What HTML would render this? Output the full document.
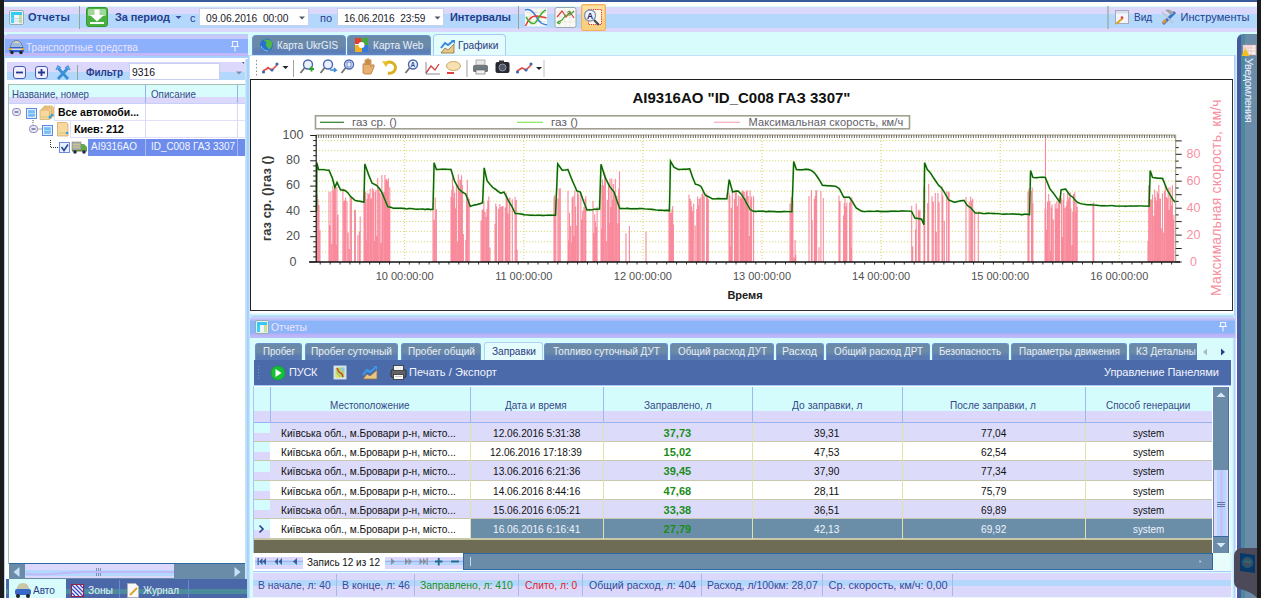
<!DOCTYPE html>
<html><head><meta charset="utf-8">
<style>
*{margin:0;padding:0;box-sizing:border-box}
html,body{width:1261px;height:598px;overflow:hidden;background:#d8fcfc;font-family:"Liberation Sans",sans-serif;font-size:11px;color:#000}
.a{position:absolute}
.t{position:absolute;white-space:nowrap;line-height:1}
svg{position:absolute;left:0;top:0;overflow:visible}
</style></head><body>
<div class="a" style="left:0px;top:0px;width:1261px;height:34px;background:linear-gradient(#3a5a9c 0,#3a5a9c 2px,#fff 2px,#fff 6.5px,#d8fcfc 6.5px,#d8fcfc 7px,#dcd8fc 7px,#dcd8fc 14px,#b4d8fc 14px,#b4d8fc 28.5px,#dcd8fc 28.5px,#dcd8fc 32px,#d8fcfc 32px)"></div>
<svg width="1261" height="598">
 <rect x="9.5" y="10.5" width="14" height="14" rx="1.5" fill="#e8f4f4" stroke="#98a8b0"/>
 <rect x="11" y="12" width="11" height="3" fill="#38c8f8"/>
 <rect x="11" y="15" width="3" height="8" fill="#38d0f8"/>
 <rect x="15" y="15" width="3" height="8" fill="#f4f4fc"/>
 <rect x="19" y="15" width="3" height="8" fill="#c8e098"/>
 <path d="M11 18.5h11M11 21h11" stroke="#a0c8e0" stroke-width=".6"/>
 <line x1="79.5" y1="6" x2="79.5" y2="29" stroke="#90a898"/>
 <rect x="86.5" y="7.5" width="21" height="19" rx="2.5" fill="#48b040" stroke="#389830"/>
 <rect x="88" y="9" width="18" height="7" rx="1" fill="#a0d898"/>
 <path d="M94.5 9.5h5v5.5h4.5l-7 6.5-7-6.5h4.5z" fill="#fff"/>
 <rect x="90" y="22" width="14" height="2" fill="#fff"/>
 <path d="M175.5 16h6l-3 3z" fill="#3a4d9c"/>
 <line x1="518.5" y1="6" x2="518.5" y2="29" stroke="#90a898"/>
 <rect x="525" y="8.5" width="22" height="18" fill="#fbfbf6"/>
 <path d="M526 12.5h20M526 17h20M526 21.5h20M531 9v17M536 9v17M541 9v17" stroke="#e0dcc8" stroke-width=".7"/>
 <path d="M525 10c6-2 9 3 12 8s5 6 10 7" stroke="#3a80e8" stroke-width="1.5" fill="none"/>
 <path d="M525.5 26c3-7 6-10 10-10s6 1 11 2" stroke="#e83830" stroke-width="1.5" fill="none"/>
 <path d="M526 17c3 5 6 8 9 6s6-12 11-13" stroke="#40b030" stroke-width="1.5" fill="none"/>
 <rect x="555" y="7.5" width="21" height="20" rx="2" fill="#fafaf8" stroke="#98a8b0"/>
 <path d="M556 12h19M556 17h19M556 22h19M560 8v19M565 8v19M570 8v19" stroke="#e8e4d0" stroke-width=".7"/>
 <path d="M557 17l5-6 4 6 4-5 4 6" stroke="#e04040" stroke-width="1.2" fill="none"/>
 <path d="M557 23l5-3 4-5 4 0 4-4" stroke="#40a030" stroke-width="1.2" fill="none"/>
 <circle cx="559" cy="22.5" r="1.3" fill="none" stroke="#40a030"/><circle cx="569" cy="12.5" r="1.3" fill="none" stroke="#40a030"/>
 <rect x="581.5" y="4.5" width="24" height="26" rx="1.5" fill="#f8d080" stroke="#f0b060"/>
 <rect x="583" y="6" width="21" height="12" fill="#fce0a0"/>
 <rect x="588.5" y="9.5" width="13" height="15" fill="#fff8e8" stroke="#e03030" stroke-dasharray="1.2 1"/>
 <circle cx="590" cy="15.5" r="5.5" fill="#f0f4ff" stroke="#8898b8" stroke-width="1.4"/>
 <path d="M594 20l5 5" stroke="#404858" stroke-width="2.2"/>
 <text x="587" y="19" font-size="8.5" font-weight="bold" fill="#202868" font-family="Liberation Sans">A</text>
 <line x1="1108" y1="6" x2="1108" y2="29" stroke="#90a898" stroke-width="1.2"/>
 <rect x="1115.5" y="10.5" width="13" height="13" fill="#f4f4fc" stroke="#a8a8b8"/>
 <rect x="1116" y="11" width="12" height="2.5" fill="#d8e0f0"/>
 <path d="M1116 24l7-6" stroke="#e0a020" stroke-width="2"/>
 <circle cx="1122" cy="17.5" r="1.3" fill="#e04040"/>
 <path d="M1163 24l12-12" stroke="#3a70c8" stroke-width="3"/>
 <path d="M1162 12l11 11" stroke="#c0c0c8" stroke-width="1.5"/>
 <path d="M1163 23l3-3" stroke="#e09030" stroke-width="3"/>
 <path d="M1165 10q5-2 9 3l-3 2z" fill="#a0a0a8"/>
</svg>
<div class="t" style="left:28.0px;top:12.0px;font-size:11px;color:#2a3d8c;font-weight:bold;letter-spacing:0.18px;">Отчеты</div>
<div class="t" style="left:115.0px;top:12.0px;font-size:11px;color:#2a3d8c;font-weight:bold;letter-spacing:-0.11px;">За период</div>
<div class="t" style="left:190.0px;top:12.5px;font-size:11px;color:#2a3d8c;">c</div>
<div class="a" style="left:199px;top:8px;width:110px;height:18px;background:#fff;border:1px solid #c8d0f0"></div>
<div class="t" style="left:206.0px;top:13.0px;font-size:11px;color:#181828;transform:scaleX(0.930);transform-origin:0 0;">09.06.2016  00:00</div>
<div class="t" style="left:320.0px;top:12.5px;font-size:11px;color:#2a3d8c;">по</div>
<div class="a" style="left:337px;top:8px;width:107px;height:18px;background:#fff;border:1px solid #c8d0f0"></div>
<div class="t" style="left:344.0px;top:13.0px;font-size:11px;color:#181828;transform:scaleX(0.918);transform-origin:0 0;">16.06.2016  23:59</div>
<svg width="1261" height="598"><path d="M299 16.5h6l-3 3z" fill="#505868"/><path d="M434.5 16.5h6l-3 3z" fill="#505868"/></svg>
<div class="t" style="left:450.0px;top:12.0px;font-size:11px;color:#2a3d8c;font-weight:bold;letter-spacing:-0.11px;">Интервалы</div>
<div class="t" style="left:1133.5px;top:12.0px;font-size:11px;color:#2a3d8c;transform:scaleX(0.914);transform-origin:0 0;">Вид</div>
<div class="t" style="left:1180.5px;top:12.0px;font-size:11px;color:#2a3d8c;letter-spacing:0.04px;">Инструменты</div>
<div class="a" style="left:0px;top:0px;width:4px;height:598px;background:#1c1c1c"></div>
<div class="a" style="left:1257px;top:34px;width:4px;height:564px;background:#1c1c1c"></div>
<div class="a" style="left:1257px;top:0px;width:4px;height:34px;background:#1c1c1c"></div>
<div class="a" style="left:4px;top:34px;width:244px;height:564px;background:#fff;border-left:1px solid #b0d0f8;border-right:1px solid #a8c8f8"></div>
<div class="a" style="left:245px;top:34px;width:3px;height:564px;background:linear-gradient(90deg,#c8f0fc,#a8c8f8)"></div>
<div class="a" style="left:5px;top:34px;width:243px;height:25px;border-radius:3px 3px 0 0;background:linear-gradient(#b0d0f8 0,#b0d0f8 1px,#c8c8fc 1px,#c8c8fc 4.5px,#8cb0fc 4.5px,#8cb0fc 18.5px,#c0b8f8 18.5px,#c0b8f8 21.5px,#a8d0fc 21.5px,#a8d0fc 23.5px,#fff 23.5px)"></div>
<svg width="1261" height="598">
 <path d="M10.5 49c0-6 3-8.5 6-8.5s6 2.5 6 8.5z" fill="#d8d0b0" stroke="#4868b0" stroke-width=".8"/>
 <rect x="12" y="43" width="9" height="4" rx="1" fill="#a0b8e0"/>
 <rect x="9" y="47" width="15" height="5" rx="1.5" fill="#3060c0"/>
 <rect x="10" y="48.5" width="13" height="1.4" fill="#f0f0f0"/>
 <rect x="9" y="48" width="2.5" height="2" fill="#f0a020"/><rect x="21.5" y="48" width="2.5" height="2" fill="#f0a020"/>
 <circle cx="12" cy="52.5" r="1.7" fill="#222"/><circle cx="21" cy="52.5" r="1.7" fill="#222"/>
 <path d="M232.5 41.5h5v5h-5zM235 46.5v5M231 46.5h8" stroke="#f0f0ff" fill="none" stroke-width="1.1"/>
</svg>
<div class="t" style="left:26.0px;top:42.0px;font-size:11px;color:#ece4ff;transform:scaleX(0.915);transform-origin:0 0;">Транспортные средства</div>
<div class="a" style="left:6px;top:59px;width:239px;height:2px;background:#fff"></div>
<div class="a" style="left:7px;top:62px;width:238px;height:18px;background:linear-gradient(#dcd8fc 0,#dcd8fc 10px,#b4d8fc 10px)"></div>
<svg width="1261" height="598">
 <rect x="13.5" y="66.5" width="12" height="12" rx="2.5" fill="#f0f0ff" stroke="#4858b0"/>
 <path d="M16 72.5h7" stroke="#283890" stroke-width="1.8"/>
 <rect x="35.5" y="66.5" width="12" height="12" rx="2.5" fill="#f0f0ff" stroke="#4858b0"/>
 <path d="M38 72.5h7M41.5 69v7" stroke="#283890" stroke-width="1.8"/>
 <path d="M58 68l10 11M68 68l-10 11" stroke="#3890d8" stroke-width="2.8"/>
 <path d="M56 70l2-4 3 2M70 70l-2-4-3 2" stroke="#4898e0" stroke-width="1.4" fill="none"/>
 <line x1="77.5" y1="65" x2="77.5" y2="80" stroke="#90a898"/>
 <path d="M236 71.5h6l-3 3z" fill="#8090a8"/>
 <path d="M242 62l2 0 0 2z" fill="#3a4a98"/>
</svg>
<div class="t" style="left:86.0px;top:67.0px;font-size:11px;color:#2a3d8c;font-weight:bold;transform:scaleX(0.901);transform-origin:0 0;">Фильтр</div>
<div class="a" style="left:129px;top:63px;width:91px;height:17px;background:#fff;border:1px solid #c8d0f0"></div>
<div class="t" style="left:132.0px;top:67.0px;font-size:11px;color:#101018;transform:scaleX(0.939);transform-origin:0 0;">9316</div>
<div class="a" style="left:8px;top:84px;width:237px;height:1px;background:#a8c0b0"></div>
<div class="a" style="left:8px;top:84px;width:1px;height:480px;background:#a8c0b0"></div>
<div class="a" style="left:9px;top:85px;width:236px;height:18px;background:linear-gradient(#d8fcfc 0,#d8fcfc 12px,#dcd8fc 12px)"></div>
<div class="a" style="left:145px;top:85px;width:1px;height:18px;background:#98b0f0"></div>
<div class="a" style="left:237px;top:85px;width:1px;height:18px;background:#98b0f0"></div>
<div class="t" style="left:12.0px;top:89.0px;font-size:11px;color:#384888;transform:scaleX(0.882);transform-origin:0 0;">Название, номер</div>
<div class="t" style="left:151.0px;top:89.0px;font-size:11px;color:#384888;transform:scaleX(0.889);transform-origin:0 0;">Описание</div>
<div class="a" style="left:9px;top:103px;width:236px;height:1px;background:#c8d0f8"></div>
<div class="a" style="left:54px;top:104px;width:191px;height:17px;border-left:1px solid #e0e0f8;border-bottom:1px solid #e0e0f8"></div>
<div class="a" style="left:70px;top:121px;width:175px;height:17px;border-left:1px solid #e0e0f8;border-bottom:1px solid #e0e0f8"></div>
<div class="a" style="left:145px;top:104px;width:1px;height:34px;background:#d8d8f8"></div>
<div class="a" style="left:237px;top:104px;width:1px;height:34px;background:#d8d8f8"></div>
<div class="a" style="left:88px;top:139px;width:157px;height:17px;background:#6e8cec"></div>
<div class="a" style="left:145px;top:139px;width:1px;height:17px;background:#a8b8f0"></div>
<div class="a" style="left:237px;top:139px;width:1px;height:17px;background:#a8b8f0"></div>
<svg width="1261" height="598">
 <rect x="12.5" y="108.5" width="8" height="7" rx="3" fill="#e8e8f8" stroke="#8888b8"/><path d="M14.5 112h4" stroke="#505080" stroke-width="1.2"/>
 <rect x="26.5" y="108.5" width="10" height="10" fill="#e0f0ff" stroke="#5a8ae8"/><rect x="28.5" y="110.5" width="6" height="6" fill="#70c0f8" stroke="#80a8f0" stroke-width=".5"/><path d="M28.5 113.5h6" stroke="#c0e0ff" stroke-width=".8"/>
 <path d="M44 106h8l1.5 1.5v9h-9.5z" fill="#f0c880" stroke="#c8a050" stroke-width=".6"/>
 <path d="M42 108h8l1.5 1.5v9h-9.5z" fill="#f4d090" stroke="#c8a050" stroke-width=".6"/>
 <path d="M40 110h8l1.5 1.5v8h-9.5z" fill="#f8d8a0" stroke="#c8a050" stroke-width=".6"/>
 <path d="M41 117h7" stroke="#c8d070" stroke-width="1"/>
 <circle cx="50" cy="117" r="1.6" fill="#30a0e0"/><circle cx="52" cy="115" r="1.3" fill="#30a0e0"/>
 <rect x="29.5" y="125.5" width="8" height="7" rx="3" fill="#e8e8f8" stroke="#8888b8"/><path d="M31.5 129h4" stroke="#505080" stroke-width="1.2"/>
 <path d="M33 120v4.5M38.5 129h3" stroke="#505050" stroke-dasharray="1 1"/>
 <rect x="42.5" y="125.5" width="10" height="10" fill="#e0f0ff" stroke="#5a8ae8"/><rect x="44.5" y="127.5" width="6" height="6" fill="#70c0f8" stroke="#80a8f0" stroke-width=".5"/><path d="M44.5 130.5h6" stroke="#c0e0ff" stroke-width=".8"/>
 <path d="M57.5 122.5h9l1.5 1.5v12h-10.5z" fill="#f8d8a0" stroke="#c8a050" stroke-width=".7"/>
 <path d="M59 133h6" stroke="#c8d070" stroke-width="1"/>
 <circle cx="67" cy="133" r="1.3" fill="#30a0e0"/>
 <path d="M50.5 140v7.5h8" stroke="#303030" fill="none" stroke-dasharray="1 1"/>
 <rect x="59.5" y="142.5" width="10" height="10" fill="#e8f0ff" stroke="#6a8ae0"/>
 <path d="M61.5 147l2.5 3.5 4-6" stroke="#2a4a98" stroke-width="1.6" fill="none"/>
 <rect x="72" y="142" width="9" height="8" fill="#b0b0a8" stroke="#808078" stroke-width=".6"/>
 <path d="M73 144.5h7M73 147h7" stroke="#d8d880" stroke-width=".6"/>
 <path d="M81 144h3l3 3v4h-6z" fill="#60a848"/>
 <rect x="72" y="150" width="15" height="1.5" fill="#608838"/>
 <circle cx="75" cy="152" r="1.8" fill="#28285a"/><circle cx="84" cy="152" r="1.8" fill="#28285a"/>
</svg>
<div class="t" style="left:58.0px;top:107.0px;font-size:11px;color:#080808;font-weight:bold;transform:scaleX(0.950);transform-origin:0 0;">Все автомоби...</div>
<div class="t" style="left:74.0px;top:124.0px;font-size:11px;color:#080808;font-weight:bold;letter-spacing:-0.18px;">Киев: 212</div>
<div class="t" style="left:91.0px;top:141.0px;font-size:11px;color:#f4f8ff;transform:scaleX(0.905);transform-origin:0 0;">AI9316AO</div>
<div class="t" style="left:151.0px;top:141.0px;font-size:11px;color:#f4f8ff;transform:scaleX(0.902);transform-origin:0 0;">ID_C008 ГАЗ 3307</div>
<div class="a" style="left:9px;top:563px;width:236px;height:1px;background:#2a6aa8"></div>
<div class="a" style="left:9px;top:564px;width:236px;height:15px;background:#6a8ca8"></div>
<div class="a" style="left:25px;top:564px;width:149px;height:14px;background:linear-gradient(#dcd8fc 0,#dcd8fc 6px,#b4d8fc 6px,#b4d8fc 12px,#dcd8fc 12px)"></div>
<svg width="1261" height="598">
 <path d="M19.5 567v10l-6-5z" fill="#c8e0f8"/>
 <path d="M234.5 567v10l6-5z" fill="#c8e0f8"/>
 <path d="M96.5 568v8M98.5 568v8M100.5 568v8" stroke="#8090b0"/>
 <path d="M26 574c20 2 40-2 60-2h88" stroke="#c0b8f8" stroke-width="2" fill="none"/>
</svg>
<div class="a" style="left:6px;top:579px;width:241px;height:19px;background:linear-gradient(#4a68a8 0,#4a68a8 10px,#4a8c9c 10px,#4a8c9c 15px,#4a68a8 15px)"></div>
<div class="a" style="left:8px;top:579px;width:58px;height:19px;background:#d8fcfc;border-left:1px solid #4a68a8"></div>
<svg width="1261" height="598">
 <path d="M16 594c0-8 3-11 7-11s7 3 7 11z" fill="#c8c8a8"/>
 <rect x="15" y="589" width="16" height="6" rx="2" fill="#3868c8"/>
 <circle cx="18" cy="596" r="2" fill="#222"/><circle cx="28" cy="596" r="2" fill="#222"/>
 <rect x="71.5" y="584.5" width="12" height="12" fill="#f0f0ff" stroke="#a02040"/>
 <path d="M80 585l3 3M76 585l7 7M72 585l11 11M72 589l7 7M72 593l3 3" stroke="#3a48c8" stroke-width="1.3"/>
 <line x1="119.5" y1="580" x2="119.5" y2="598" stroke="#6a8ad0"/>
 <line x1="188.5" y1="580" x2="188.5" y2="598" stroke="#6a8ad0"/>
 
 <path d="M127.5 583.5h8l3 3v11h-11z" fill="#f8f8f8" stroke="#b0b0b8"/>
 <path d="M130 595l7-7" stroke="#e0a020" stroke-width="1.8"/>
</svg>
<div class="t" style="left:33.0px;top:585.0px;font-size:11px;color:#2a3d8c;transform:scaleX(0.917);transform-origin:0 0;">Авто</div>
<div class="t" style="left:88.0px;top:585.0px;font-size:11px;color:#e8f0ff;transform:scaleX(0.935);transform-origin:0 0;">Зоны</div>
<div class="t" style="left:143.0px;top:585.0px;font-size:11px;color:#e8f0ff;transform:scaleX(0.896);transform-origin:0 0;">Журнал</div>
<div class="a" style="left:248px;top:34px;width:989px;height:282px;background:#d8fcfc"></div>
<div class="a" style="left:252px;top:35px;width:94px;height:21px;border-radius:4px 4px 0 0;background:linear-gradient(#6a8aa8 0,#6a8aa8 10px,#5a7cb8 16px,#6a90c8 21px);border:1px solid #6a90c8;border-bottom:none"></div>
<div class="a" style="left:347px;top:35px;width:84px;height:21px;border-radius:4px 4px 0 0;background:linear-gradient(#6a8aa8 0,#6a8aa8 10px,#5a7cb8 16px,#6a90c8 21px);border:1px solid #6a90c8;border-bottom:none"></div>
<div class="a" style="left:433px;top:34px;width:73px;height:22px;border-radius:4px 4px 0 0;background:#e4fcfc;border:1px solid #a8c8f8;border-bottom:none"></div>
<svg width="1261" height="598">
 <circle cx="266.5" cy="45" r="6.5" fill="#2870d0"/><path d="M262 40c3 0 5 2 4 4s2 3 3 6c2-2 4-5 3-8-1-2-4-3-10-2z" fill="#50b848"/>
 <path d="M261 46c1 3 4 5 7 5" stroke="#90c8f8" fill="none"/>
 <rect x="355" y="38" width="13" height="14" rx="1" fill="#fff"/>
 <path d="M355 38h7v6h-7z" fill="#e04030"/><path d="M361 38h7v7h-6z" fill="#48a840"/><path d="M355 45h7v7h-7z" fill="#f0b020"/><path d="M362 45h6v7h-6z" fill="#3878d8"/>
 <circle cx="361.5" cy="45" r="3" fill="#fff"/>
 <path d="M441 53l4-5 3 2 6-6v9z" fill="#e8c880" stroke="#8a7050" stroke-width=".8"/>
 <path d="M441 48l4-5 3 2 5-4" stroke="#3a88d8" stroke-width="2" fill="none"/><path d="M451 40h4v4z" fill="#3a88d8"/>
</svg>
<div class="t" style="left:277.0px;top:40.0px;font-size:11px;color:#e8f0ff;transform:scaleX(0.889);transform-origin:0 0;">Карта UkrGIS</div>
<div class="t" style="left:372.5px;top:40.0px;font-size:11px;color:#e8f0ff;transform:scaleX(0.919);transform-origin:0 0;">Карта Web</div>
<div class="t" style="left:458.0px;top:40.0px;font-size:11px;color:#2a3a80;transform:scaleX(0.924);transform-origin:0 0;">Графики</div>
<div class="a" style="left:248px;top:55px;width:989px;height:261px;background:#fff"></div>
<div class="a" style="left:248px;top:55px;width:2px;height:261px;background:linear-gradient(90deg,#a8c8f8,#c8f0fc)"></div>
<div class="a" style="left:1234px;top:55px;width:3px;height:261px;background:linear-gradient(90deg,#a8c8f8,#d0f8fc)"></div>
<div class="a" style="left:250px;top:55px;width:984px;height:1px;background:#c8e0f8"></div>
<svg width="1261" height="598">
 <path d="M256.5 60v16" stroke="#909090" stroke-dasharray="1.5 2"/>
 <path d="M263 71l5-3 4 2 5-5" stroke="#e84848" stroke-width="1.6" fill="none"/>
 <circle cx="263.5" cy="72" r="1.6" fill="#3a6ab0"/><circle cx="272" cy="70" r="1.6" fill="#3a6ab0"/><circle cx="277" cy="64" r="1.6" fill="#3a6ab0"/><circle cx="268" cy="68" r="1.2" fill="#e84848"/>
 <path d="M282.5 66h6l-3 3z" fill="#202020"/>
 <line x1="293.5" y1="60" x2="293.5" y2="77" stroke="#a0a0a0"/>
 <g stroke="#4a68b0" fill="#eaf0ff" stroke-width="1.4">
  <circle cx="308" cy="64.5" r="4.5"/><circle cx="328" cy="64.5" r="4.5"/><circle cx="349" cy="64.5" r="4.5"/><circle cx="413" cy="64.5" r="4.5"/>
 </g>
 <path d="M304.5 68l-4 5M324.5 68l-4 5M345.5 68l-4 5M409.5 68l-4 5" stroke="#707070" stroke-width="1.8"/>
 <path d="M309 69h5M311.5 66.5v5" stroke="#30a030" stroke-width="2"/>
 <path d="M330 70h6l-2-2M336 70l-2 2" stroke="#3a8ad8" stroke-width="1.5" fill="none"/>
 <path d="M347 62h4v5h-4z" stroke="#4a68b0" fill="none" stroke-width=".8"/>
 <path d="M363 73v-8c0-2 2-2 2 0v-4c0-2 2-2 2 0v4-5c0-2 2-2 2 0v5-4c0-2 2-2 2 0v6l1-2c1-1 3 0 2 2l-3 7h-6z" fill="#e8b070" stroke="#b87838" stroke-width=".8"/>
 <path d="M385 64a6 5.5 0 1 1 3 9" stroke="#d8b020" stroke-width="3" fill="none"/><path d="M382 61l4 6 3-5z" fill="#e8c020"/>
 <text x="410.5" y="67" font-size="6.5" font-weight="bold" fill="#3050a0" font-family="Liberation Sans">A</text>
 <path d="M426 73l5-7 4 4 4-6" stroke="#d04040" stroke-width="1.3" fill="none"/><path d="M426 74h14M426 62v12" stroke="#707070" stroke-width=".8"/>
 <ellipse cx="453.5" cy="66" rx="7" ry="4.5" fill="#f8e0b0" stroke="#c8a868"/>
 <path d="M447 73h7" stroke="#e04040" stroke-width="2"/>
 <line x1="467" y1="60" x2="467" y2="77" stroke="#a0a0a0"/>
 <rect x="473" y="65" width="15" height="7" rx="1.5" fill="#707880"/><rect x="476" y="60" width="9" height="5" fill="#e8e8e8" stroke="#808080" stroke-width=".6"/><rect x="476" y="70" width="9" height="4" fill="#f0f0f0" stroke="#606060" stroke-width=".6"/>
 <rect x="495.5" y="62" width="14" height="11" rx="2" fill="#282830"/><circle cx="502.5" cy="67.5" r="3.5" fill="#505868" stroke="#9098a8"/><rect x="499" y="60.5" width="5" height="2" fill="#383840"/>
 <path d="M517 71l5-3 4 2 5-5" stroke="#e84848" stroke-width="1.6" fill="none"/>
 <circle cx="517.5" cy="72" r="1.6" fill="#3a6ab0"/><circle cx="526" cy="70" r="1.6" fill="#3a6ab0"/><circle cx="531" cy="64" r="1.6" fill="#3a6ab0"/>
 <path d="M536 67h6l-3 3z" fill="#202020"/>
 <line x1="544" y1="60" x2="544" y2="77" stroke="#c0c0c0"/>
</svg>
<div class="a" style="left:250px;top:78.5px;width:983px;height:232px;background:#fff;border:1px solid #303030;border-top:1.5px solid #202020;border-left:1.5px solid #202020"></div>
<svg width="1261" height="598">
 <text x="741.5" y="102.5" text-anchor="middle" font-size="15" font-weight="bold" fill="#101010" font-family="Liberation Sans">AI9316AO "ID_C008 ГАЗ 3307"</text>
 <rect x="315.5" y="115.8" width="594" height="13" fill="#fff" stroke="#a0a090" stroke-width="1.6"/>
 <line x1="320" y1="122.3" x2="344" y2="122.3" stroke="#3a8a3a" stroke-width="1.3"/>
 <line x1="517" y1="122.3" x2="543" y2="122.3" stroke="#90e860" stroke-width="1.3"/>
 <line x1="714" y1="122.3" x2="740" y2="122.3" stroke="#f8b0c0" stroke-width="1.3"/>
 <path d="M316.2 251.9H1175.7 M316.2 241.8H1175.7 M316.2 231.6H1175.7 M316.2 221.5H1175.7 M316.2 211.4H1175.7 M316.2 201.3H1175.7 M316.2 191.2H1175.7 M316.2 181.0H1175.7 M316.2 170.9H1175.7 M316.2 160.8H1175.7 M316.2 150.7H1175.7 M316.2 140.6H1175.7 M404.7 135.0V262.0 M523.8 135.0V262.0 M642.9 135.0V262.0 M762.0 135.0V262.0 M881.1 135.0V262.0 M1000.2 135.0V262.0 M1119.3 135.0V262.0" stroke="#d4d460" stroke-width="1" stroke-dasharray="1 2" fill="none"/>
 <path d="M316.5 262V243.4 M317.3 262V194.7 M318.5 262V254.3 M329.0 262V191.7 M329.7 262V225.3 M330.9 262V191.6 M331.6 262V244.1 M332.8 262V185.9 M333.6 262V189.6 M334.4 262V189.7 M335.4 262V184.3 M336.1 262V245.0 M336.9 262V187.0 M338.0 262V214.8 M342.9 262V188.3 M344.1 262V201.2 M344.9 262V200.3 M345.6 262V197.4 M347.0 262V201.1 M348.2 262V232.4 M349.4 262V248.9 M350.2 262V197.1 M351.4 262V196.9 M354.6 262V210.1 M355.4 262V209.7 M357.9 262V234.9 M359.4 262V231.7 M360.2 262V216.5 M364.0 262V189.1 M365.0 262V193.3 M365.7 262V191.5 M366.4 262V240.3 M367.1 262V198.9 M367.9 262V193.1 M368.9 262V194.2 M370.1 262V188.7 M370.9 262V199.3 M371.6 262V198.3 M372.3 262V188.1 M373.5 262V189.6 M374.3 262V241.0 M375.1 262V191.7 M375.9 262V190.1 M377.0 262V235.8 M377.7 262V178.0 M378.9 262V187.8 M380.1 262V192.7 M381.1 262V242.9 M381.9 262V175.1 M382.7 262V192.5 M383.9 262V191.7 M384.9 262V174.9 M385.7 262V179.5 M386.7 262V179.1 M387.7 262V181.0 M388.4 262V178.2 M389.1 262V200.8 M389.8 262V187.2 M433.0 262V203.0 M434.2 262V219.8 M435.2 262V197.4 M436.4 262V209.2 M451.0 262V197.0 M451.8 262V189.8 M452.5 262V173.4 M453.2 262V185.7 M453.9 262V198.1 M454.6 262V192.6 M455.6 262V208.2 M456.4 262V184.9 M457.6 262V241.6 M458.3 262V174.2 M459.1 262V191.4 M459.9 262V179.5 M460.6 262V180.1 M461.6 262V175.3 M462.4 262V185.2 M463.4 262V233.9 M465.8 262V239.8 M466.5 262V198.7 M467.3 262V179.8 M468.0 262V197.1 M469.2 262V198.6 M481.0 262V220.4 M482.2 262V210.0 M483.2 262V209.0 M483.9 262V201.2 M485.1 262V211.9 M486.3 262V217.0 M487.0 262V209.1 M487.8 262V200.4 M488.8 262V196.4 M490.0 262V247.6 M495.0 262V224.0 M495.8 262V203.6 M496.6 262V206.4 M498.6 262V208.8 M499.8 262V203.9 M501.0 262V207.0 M502.2 262V205.9 M503.0 262V205.9 M505.2 262V207.4 M506.2 262V192.8 M507.2 262V196.3 M508.0 262V213.5 M509.2 262V198.1 M509.9 262V197.6 M512.3 262V199.3 M515.1 262V196.8 M516.3 262V200.0 M517.1 262V249.8 M554.0 262V197.2 M554.7 262V195.0 M555.9 262V200.0 M557.9 262V198.6 M559.1 262V188.4 M560.3 262V188.3 M568.0 262V190.8 M568.8 262V240.2 M569.5 262V212.7 M570.7 262V225.9 M571.4 262V242.2 M572.2 262V197.6 M573.2 262V196.1 M574.0 262V236.3 M574.8 262V190.2 M575.6 262V206.4 M576.8 262V225.6 M577.5 262V191.9 M578.7 262V193.8 M580.9 262V192.8 M581.9 262V219.6 M582.7 262V210.8 M583.9 262V206.9 M585.1 262V199.0 M585.8 262V196.3 M593.0 262V200.9 M593.7 262V233.0 M594.7 262V214.3 M595.4 262V221.3 M596.4 262V226.9 M597.1 262V207.1 M601.0 262V184.9 M601.7 262V228.8 M602.5 262V179.6 M603.5 262V185.4 M604.7 262V171.9 M605.4 262V174.8 M606.6 262V241.1 M607.3 262V199.7 M608.5 262V183.8 M609.3 262V223.3 M610.0 262V178.4 M611.0 262V207.0 M611.8 262V178.4 M612.6 262V199.8 M613.4 262V183.9 M614.1 262V194.6 M615.3 262V178.8 M616.0 262V194.8 M616.8 262V196.0 M618.0 262V223.3 M618.7 262V188.6 M619.5 262V171.3 M626.0 262V233.3 M629.4 262V226.0 M646.0 262V231.6 M669.0 262V207.8 M670.0 262V212.5 M671.0 262V212.7 M672.0 262V209.0 M672.7 262V206.1 M673.4 262V224.2 M689.0 262V194.6 M690.2 262V198.7 M691.0 262V201.4 M691.7 262V206.5 M692.5 262V211.1 M693.7 262V203.5 M695.2 262V225.5 M696.8 262V208.9 M697.6 262V196.4 M698.4 262V205.6 M699.1 262V199.0 M700.3 262V197.5 M702.0 262V193.9 M703.0 262V190.2 M704.2 262V196.2 M706.6 262V193.6 M707.6 262V195.1 M708.3 262V199.2 M729.0 262V192.5 M729.8 262V195.4 M730.5 262V246.3 M731.3 262V207.7 M732.3 262V191.9 M734.5 262V199.0 M735.3 262V190.8 M736.3 262V189.9 M737.3 262V205.9 M738.3 262V195.6 M740.5 262V198.6 M741.2 262V198.3 M742.2 262V248.3 M743.2 262V190.8 M743.9 262V191.7 M740.0 262V196.3 M741.2 262V204.6 M742.0 262V190.5 M743.0 262V195.3 M744.2 262V192.0 M745.4 262V198.0 M746.2 262V191.4 M747.2 262V190.1 M748.2 262V196.0 M749.4 262V236.0 M750.1 262V190.6 M750.8 262V199.4 M751.6 262V196.4 M753.6 262V196.3 M790.0 262V203.6 M791.2 262V197.6 M791.9 262V197.1 M792.9 262V201.0 M794.1 262V257.4 M795.1 262V240.0 M795.8 262V254.4 M809.0 262V196.0 M811.4 262V190.1 M812.1 262V220.0 M814.3 262V199.1 M815.1 262V196.2 M815.9 262V190.3 M816.6 262V190.4 M819.0 262V247.3 M820.9 262V191.1 M823.3 262V197.9 M839.0 262V195.4 M840.0 262V201.3 M843.6 262V215.4 M844.3 262V203.2 M845.0 262V197.7 M845.8 262V206.6 M846.8 262V202.4 M849.6 262V202.6 M850.4 262V200.3 M851.1 262V247.9 M851.8 262V197.2 M911.7 262V205.7 M912.7 262V246.5 M915.5 262V229.3 M916.2 262V203.6 M918.4 262V209.7 M919.2 262V210.9 M920.0 262V209.5 M924.0 262V187.2 M924.7 262V187.3 M927.7 262V203.1 M928.7 262V183.7 M932.1 262V196.3 M933.3 262V201.8 M935.3 262V193.0 M936.3 262V231.8 M937.9 262V193.0 M939.1 262V202.2 M942.0 262V186.5 M942.8 262V195.6 M944.3 262V220.7 M946.7 262V191.6 M948.4 262V191.4 M949.1 262V192.3 M966.0 262V197.1 M969.2 262V201.5 M970.7 262V196.6 M971.5 262V200.7 M972.7 262V198.8 M974.7 262V210.8 M978.3 262V211.3 M1028.0 262V191.6 M1029.0 262V188.6 M1031.5 262V191.0 M1032.2 262V187.5 M1032.9 262V203.2 M1045.0 262V208.3 M1045.8 262V209.6 M1046.5 262V229.7 M1047.5 262V201.6 M1048.7 262V194.1 M1049.9 262V200.9 M1050.6 262V251.1 M1051.4 262V207.5 M1052.1 262V204.5 M1053.3 262V219.4 M1055.2 262V203.6 M1055.9 262V208.8 M1056.9 262V200.7 M1057.7 262V225.6 M1058.7 262V198.1 M1059.5 262V196.5 M1058.0 262V208.6 M1059.2 262V255.1 M1061.4 262V198.3 M1062.4 262V237.0 M1063.1 262V200.1 M1063.8 262V192.9 M1065.0 262V207.8 M1066.2 262V205.9 M1066.9 262V201.2 M1067.7 262V192.7 M1068.4 262V199.4 M1069.2 262V197.2 M1070.2 262V192.4 M1070.9 262V208.5 M1072.1 262V245.3 M1072.8 262V211.9 M1073.6 262V194.0 M1074.8 262V192.3 M1075.5 262V211.7 M1076.2 262V201.4 M1077.2 262V206.7 M1093.0 262V203.2 M1093.8 262V202.4 M1148.0 262V240.8 M1148.7 262V185.2 M1149.4 262V194.0 M1150.6 262V199.2 M1151.8 262V199.5 M1152.5 262V194.4 M1153.7 262V215.8 M1154.7 262V189.4 M1155.4 262V197.0 M1156.4 262V200.5 M1157.2 262V191.4 M1158.0 262V194.0 M1158.8 262V185.0 M1159.8 262V198.8 M1160.5 262V198.4 M1161.3 262V228.2 M1162.5 262V193.3 M1163.7 262V232.6 M1164.5 262V190.9 M1165.3 262V185.1 M1166.5 262V197.1 M1167.2 262V198.5 M1168.2 262V187.8 M1169.0 262V210.1 M1170.0 262V187.2 M1170.7 262V198.0 M1171.7 262V205.5 M1172.4 262V185.3 M1173.1 262V219.8 M1173.9 262V214.9 M1045.5 262V135.0 M317.0 262V196.0 M318.0 262V199.0 M319.0 262V205.0 M320.0 262V230.0" stroke="#f88a9c" stroke-width="1.1" fill="none"/>
 <polyline points="316.5,211.0 316.8,162.7 318.5,169.5 321.1,169.6 323.8,169.6 326.4,170.1 329.0,170.2 332.5,178.5 334.8,187.5 337.0,182.4 340.5,189.8 345.0,190.5 347.8,192.7 350.6,196.6 355.0,200.4 358.0,201.0 361.0,201.5 364.0,202.2 364.8,163.9 368.7,175.0 372.0,183.0 376.5,185.3 379.4,188.4 382.2,193.2 385.0,200.0 387.8,206.7 390.6,207.2 393.5,208.3 396.1,208.3 398.8,208.2 401.4,208.3 404.0,208.5 406.7,208.9 409.3,208.5 411.9,208.6 414.6,209.0 417.2,209.2 419.8,209.1 422.5,209.0 425.1,209.5 427.7,209.0 430.4,209.5 433.0,209.4 434.1,162.7 436.4,169.5 439.3,169.4 442.2,169.3 445.2,169.3 448.1,169.4 451.0,169.5 454.4,180.8 458.9,189.0 462.3,192.1 465.7,194.0 470.2,206.3 473.6,205.2 477.0,204.5 479.8,203.8 482.6,202.7 484.2,167.9 487.1,180.8 490.0,184.4 492.8,187.5 495.4,189.1 498.1,191.4 500.7,193.2 504.0,192.0 508.6,201.1 511.9,206.4 515.3,213.5 518.2,213.6 521.2,214.0 524.1,214.7 527.1,214.9 530.0,215.3 532.5,215.2 535.1,215.4 537.6,215.3 540.2,215.2 542.8,215.5 545.3,215.4 547.9,215.1 550.4,215.3 553.0,215.3 555.5,215.3 557.7,163.9 562.2,170.2 565.0,170.1 567.9,169.5 572.4,180.8 576.9,191.0 580.3,192.0 583.6,201.5 587.0,210.1 589.5,209.8 592.0,209.9 594.5,209.2 597.0,209.2 599.5,209.0 601.0,164.3 605.1,177.4 609.6,186.4 614.1,192.0 617.0,200.8 619.8,208.6 622.3,208.4 624.8,208.6 627.3,208.3 629.8,208.7 632.3,208.8 634.8,208.6 637.3,208.8 639.8,208.5 642.3,208.6 645.0,208.9 647.7,209.1 650.4,209.3 653.1,209.5 655.8,209.9 658.6,210.2 661.3,210.1 664.0,210.5 666.7,210.3 669.4,210.8 670.5,161.2 673.9,167.2 678.4,169.5 681.2,169.4 684.0,169.2 686.9,169.3 689.7,168.8 692.5,177.1 695.4,184.2 698.2,184.9 701.0,186.4 705.5,195.5 708.9,196.9 712.3,198.8 715.2,198.9 718.1,198.5 721.1,198.8 724.0,198.6 726.9,198.8 729.2,179.7 732.6,192.0 735.4,191.3 738.2,191.0 741.6,194.6 745.0,200.0 746.0,202.2 750.2,209.5 753.5,211.3 756.1,211.5 758.6,211.1 761.2,211.2 763.7,211.3 766.3,211.7 768.9,211.2 771.4,211.5 774.0,211.5 776.5,211.8 779.1,211.8 781.7,211.8 784.2,211.5 786.8,211.6 789.3,211.6 791.9,211.7 793.7,161.6 796.4,169.5 799.5,169.7 802.6,169.8 805.7,169.3 808.8,169.5 811.6,170.6 814.5,172.9 817.1,176.5 819.8,180.6 822.4,185.3 824.9,185.5 827.5,185.7 830.0,185.7 832.5,186.0 835.9,186.4 839.3,188.7 843.8,197.3 846.6,197.3 849.4,197.3 852.8,202.3 856.2,207.9 859.0,209.7 861.8,211.3 864.4,211.6 867.0,211.4 869.6,211.3 872.3,211.4 874.9,211.4 877.5,211.0 880.1,211.5 882.7,211.5 885.3,211.5 888.0,211.5 890.6,211.2 893.2,211.2 895.8,211.1 898.4,211.4 901.0,211.0 903.7,211.0 906.3,211.1 908.9,211.1 911.5,211.3 914.9,218.0 918.2,218.5 921.6,219.2 923.9,224.8 924.6,162.7 927.3,169.5 930.6,173.1 934.0,178.5 938.6,185.3 941.4,187.7 944.2,192.0 948.7,200.0 953.2,201.8 955.0,202.2 958.0,201.4 961.0,200.8 964.0,200.4 967.4,205.6 970.8,207.9 975.3,213.1 977.9,213.1 980.5,213.0 983.0,213.6 985.6,213.5 988.2,213.3 990.8,213.4 993.4,213.5 995.9,213.6 998.5,213.6 1001.1,214.1 1003.7,214.2 1006.3,214.0 1008.9,214.1 1011.4,213.9 1014.0,214.0 1016.6,214.2 1019.2,214.3 1021.8,214.7 1024.3,214.3 1026.9,214.3 1029.5,214.7 1030.6,170.6 1032.9,177.4 1036.0,177.7 1039.1,177.4 1042.2,177.2 1045.3,177.4 1049.8,188.7 1054.3,194.3 1057.1,198.3 1059.9,202.2 1061.1,189.8 1065.6,189.1 1070.1,195.5 1072.7,197.0 1075.4,200.4 1078.0,202.7 1080.6,203.6 1083.3,204.1 1085.9,204.5 1088.6,204.8 1091.3,204.8 1094.0,205.1 1096.7,205.2 1099.4,205.6 1102.0,205.8 1104.6,205.7 1107.2,205.9 1109.9,205.6 1112.5,205.6 1115.1,206.0 1117.7,206.1 1120.3,206.1 1122.9,206.1 1125.6,206.2 1128.2,206.1 1130.8,205.9 1133.4,206.1 1136.0,206.0 1138.6,205.9 1141.3,205.9 1143.9,206.1 1146.5,206.1 1149.1,206.3 1150.2,170.6 1152.5,177.4 1155.0,177.8 1157.5,178.2 1160.1,178.2 1162.6,178.5 1167.1,189.8 1170.5,195.5 1173.0,199.7 1175.5,202.2" stroke="#70e040" stroke-width="2" fill="none" opacity=".55"/>
 <polyline points="316.5,211.0 316.8,162.7 318.5,169.5 321.1,169.6 323.8,169.6 326.4,170.1 329.0,170.2 332.5,178.5 334.8,187.5 337.0,182.4 340.5,189.8 345.0,190.5 347.8,192.7 350.6,196.6 355.0,200.4 358.0,201.0 361.0,201.5 364.0,202.2 364.8,163.9 368.7,175.0 372.0,183.0 376.5,185.3 379.4,188.4 382.2,193.2 385.0,200.0 387.8,206.7 390.6,207.2 393.5,208.3 396.1,208.3 398.8,208.2 401.4,208.3 404.0,208.5 406.7,208.9 409.3,208.5 411.9,208.6 414.6,209.0 417.2,209.2 419.8,209.1 422.5,209.0 425.1,209.5 427.7,209.0 430.4,209.5 433.0,209.4 434.1,162.7 436.4,169.5 439.3,169.4 442.2,169.3 445.2,169.3 448.1,169.4 451.0,169.5 454.4,180.8 458.9,189.0 462.3,192.1 465.7,194.0 470.2,206.3 473.6,205.2 477.0,204.5 479.8,203.8 482.6,202.7 484.2,167.9 487.1,180.8 490.0,184.4 492.8,187.5 495.4,189.1 498.1,191.4 500.7,193.2 504.0,192.0 508.6,201.1 511.9,206.4 515.3,213.5 518.2,213.6 521.2,214.0 524.1,214.7 527.1,214.9 530.0,215.3 532.5,215.2 535.1,215.4 537.6,215.3 540.2,215.2 542.8,215.5 545.3,215.4 547.9,215.1 550.4,215.3 553.0,215.3 555.5,215.3 557.7,163.9 562.2,170.2 565.0,170.1 567.9,169.5 572.4,180.8 576.9,191.0 580.3,192.0 583.6,201.5 587.0,210.1 589.5,209.8 592.0,209.9 594.5,209.2 597.0,209.2 599.5,209.0 601.0,164.3 605.1,177.4 609.6,186.4 614.1,192.0 617.0,200.8 619.8,208.6 622.3,208.4 624.8,208.6 627.3,208.3 629.8,208.7 632.3,208.8 634.8,208.6 637.3,208.8 639.8,208.5 642.3,208.6 645.0,208.9 647.7,209.1 650.4,209.3 653.1,209.5 655.8,209.9 658.6,210.2 661.3,210.1 664.0,210.5 666.7,210.3 669.4,210.8 670.5,161.2 673.9,167.2 678.4,169.5 681.2,169.4 684.0,169.2 686.9,169.3 689.7,168.8 692.5,177.1 695.4,184.2 698.2,184.9 701.0,186.4 705.5,195.5 708.9,196.9 712.3,198.8 715.2,198.9 718.1,198.5 721.1,198.8 724.0,198.6 726.9,198.8 729.2,179.7 732.6,192.0 735.4,191.3 738.2,191.0 741.6,194.6 745.0,200.0 746.0,202.2 750.2,209.5 753.5,211.3 756.1,211.5 758.6,211.1 761.2,211.2 763.7,211.3 766.3,211.7 768.9,211.2 771.4,211.5 774.0,211.5 776.5,211.8 779.1,211.8 781.7,211.8 784.2,211.5 786.8,211.6 789.3,211.6 791.9,211.7 793.7,161.6 796.4,169.5 799.5,169.7 802.6,169.8 805.7,169.3 808.8,169.5 811.6,170.6 814.5,172.9 817.1,176.5 819.8,180.6 822.4,185.3 824.9,185.5 827.5,185.7 830.0,185.7 832.5,186.0 835.9,186.4 839.3,188.7 843.8,197.3 846.6,197.3 849.4,197.3 852.8,202.3 856.2,207.9 859.0,209.7 861.8,211.3 864.4,211.6 867.0,211.4 869.6,211.3 872.3,211.4 874.9,211.4 877.5,211.0 880.1,211.5 882.7,211.5 885.3,211.5 888.0,211.5 890.6,211.2 893.2,211.2 895.8,211.1 898.4,211.4 901.0,211.0 903.7,211.0 906.3,211.1 908.9,211.1 911.5,211.3 914.9,218.0 918.2,218.5 921.6,219.2 923.9,224.8 924.6,162.7 927.3,169.5 930.6,173.1 934.0,178.5 938.6,185.3 941.4,187.7 944.2,192.0 948.7,200.0 953.2,201.8 955.0,202.2 958.0,201.4 961.0,200.8 964.0,200.4 967.4,205.6 970.8,207.9 975.3,213.1 977.9,213.1 980.5,213.0 983.0,213.6 985.6,213.5 988.2,213.3 990.8,213.4 993.4,213.5 995.9,213.6 998.5,213.6 1001.1,214.1 1003.7,214.2 1006.3,214.0 1008.9,214.1 1011.4,213.9 1014.0,214.0 1016.6,214.2 1019.2,214.3 1021.8,214.7 1024.3,214.3 1026.9,214.3 1029.5,214.7 1030.6,170.6 1032.9,177.4 1036.0,177.7 1039.1,177.4 1042.2,177.2 1045.3,177.4 1049.8,188.7 1054.3,194.3 1057.1,198.3 1059.9,202.2 1061.1,189.8 1065.6,189.1 1070.1,195.5 1072.7,197.0 1075.4,200.4 1078.0,202.7 1080.6,203.6 1083.3,204.1 1085.9,204.5 1088.6,204.8 1091.3,204.8 1094.0,205.1 1096.7,205.2 1099.4,205.6 1102.0,205.8 1104.6,205.7 1107.2,205.9 1109.9,205.6 1112.5,205.6 1115.1,206.0 1117.7,206.1 1120.3,206.1 1122.9,206.1 1125.6,206.2 1128.2,206.1 1130.8,205.9 1133.4,206.1 1136.0,206.0 1138.6,205.9 1141.3,205.9 1143.9,206.1 1146.5,206.1 1149.1,206.3 1150.2,170.6 1152.5,177.4 1155.0,177.8 1157.5,178.2 1160.1,178.2 1162.6,178.5 1167.1,189.8 1170.5,195.5 1173.0,199.7 1175.5,202.2" stroke="#106010" stroke-width="1.4" fill="none"/>
 <path d="M316.2 135.0H1175.7M1175.7 135.0V262.0" stroke="#a09880" stroke-width="1" fill="none"/>
 <path d="M316.2 135.0v3 M318.7 135.0v3 M321.2 135.0v3 M323.6 135.0v3 M326.1 135.0v3 M328.6 135.0v3 M331.1 135.0v3 M333.6 135.0v3 M336.0 135.0v3 M338.5 135.0v3 M341.0 135.0v3 M343.5 135.0v3 M346.0 135.0v3 M348.4 135.0v3 M350.9 135.0v3 M353.4 135.0v3 M355.9 135.0v3 M358.4 135.0v3 M360.8 135.0v3 M363.3 135.0v3 M365.8 135.0v3 M368.3 135.0v3 M370.8 135.0v3 M373.2 135.0v3 M375.7 135.0v3 M378.2 135.0v3 M380.7 135.0v3 M383.2 135.0v3 M385.6 135.0v3 M388.1 135.0v3 M390.6 135.0v3 M393.1 135.0v3 M395.6 135.0v3 M398.0 135.0v3 M400.5 135.0v3 M403.0 135.0v3 M405.5 135.0v3 M408.0 135.0v3 M410.4 135.0v3 M412.9 135.0v3 M415.4 135.0v3 M417.9 135.0v3 M420.4 135.0v3 M422.8 135.0v3 M425.3 135.0v3 M427.8 135.0v3 M430.3 135.0v3 M432.8 135.0v3 M435.2 135.0v3 M437.7 135.0v3 M440.2 135.0v3 M442.7 135.0v3 M445.2 135.0v3 M447.6 135.0v3 M450.1 135.0v3 M452.6 135.0v3 M455.1 135.0v3 M457.6 135.0v3 M460.0 135.0v3 M462.5 135.0v3 M465.0 135.0v3 M467.5 135.0v3 M470.0 135.0v3 M472.4 135.0v3 M474.9 135.0v3 M477.4 135.0v3 M479.9 135.0v3 M482.4 135.0v3 M484.8 135.0v3 M487.3 135.0v3 M489.8 135.0v3 M492.3 135.0v3 M494.8 135.0v3 M497.2 135.0v3 M499.7 135.0v3 M502.2 135.0v3 M504.7 135.0v3 M507.2 135.0v3 M509.6 135.0v3 M512.1 135.0v3 M514.6 135.0v3 M517.1 135.0v3 M519.6 135.0v3 M522.0 135.0v3 M524.5 135.0v3 M527.0 135.0v3 M529.5 135.0v3 M532.0 135.0v3 M534.4 135.0v3 M536.9 135.0v3 M539.4 135.0v3 M541.9 135.0v3 M544.4 135.0v3 M546.8 135.0v3 M549.3 135.0v3 M551.8 135.0v3 M554.3 135.0v3 M556.8 135.0v3 M559.2 135.0v3 M561.7 135.0v3 M564.2 135.0v3 M566.7 135.0v3 M569.2 135.0v3 M571.6 135.0v3 M574.1 135.0v3 M576.6 135.0v3 M579.1 135.0v3 M581.6 135.0v3 M584.0 135.0v3 M586.5 135.0v3 M589.0 135.0v3 M591.5 135.0v3 M594.0 135.0v3 M596.4 135.0v3 M598.9 135.0v3 M601.4 135.0v3 M603.9 135.0v3 M606.4 135.0v3 M608.8 135.0v3 M611.3 135.0v3 M613.8 135.0v3 M616.3 135.0v3 M618.8 135.0v3 M621.2 135.0v3 M623.7 135.0v3 M626.2 135.0v3 M628.7 135.0v3 M631.2 135.0v3 M633.6 135.0v3 M636.1 135.0v3 M638.6 135.0v3 M641.1 135.0v3 M643.6 135.0v3 M646.0 135.0v3 M648.5 135.0v3 M651.0 135.0v3 M653.5 135.0v3 M656.0 135.0v3 M658.4 135.0v3 M660.9 135.0v3 M663.4 135.0v3 M665.9 135.0v3 M668.4 135.0v3 M670.8 135.0v3 M673.3 135.0v3 M675.8 135.0v3 M678.3 135.0v3 M680.8 135.0v3 M683.2 135.0v3 M685.7 135.0v3 M688.2 135.0v3 M690.7 135.0v3 M693.2 135.0v3 M695.6 135.0v3 M698.1 135.0v3 M700.6 135.0v3 M703.1 135.0v3 M705.6 135.0v3 M708.0 135.0v3 M710.5 135.0v3 M713.0 135.0v3 M715.5 135.0v3 M718.0 135.0v3 M720.4 135.0v3 M722.9 135.0v3 M725.4 135.0v3 M727.9 135.0v3 M730.4 135.0v3 M732.8 135.0v3 M735.3 135.0v3 M737.8 135.0v3 M740.3 135.0v3 M742.8 135.0v3 M745.2 135.0v3 M747.7 135.0v3 M750.2 135.0v3 M752.7 135.0v3 M755.2 135.0v3 M757.6 135.0v3 M760.1 135.0v3 M762.6 135.0v3 M765.1 135.0v3 M767.6 135.0v3 M770.0 135.0v3 M772.5 135.0v3 M775.0 135.0v3 M777.5 135.0v3 M780.0 135.0v3 M782.4 135.0v3 M784.9 135.0v3 M787.4 135.0v3 M789.9 135.0v3 M792.4 135.0v3 M794.8 135.0v3 M797.3 135.0v3 M799.8 135.0v3 M802.3 135.0v3 M804.8 135.0v3 M807.2 135.0v3 M809.7 135.0v3 M812.2 135.0v3 M814.7 135.0v3 M817.2 135.0v3 M819.6 135.0v3 M822.1 135.0v3 M824.6 135.0v3 M827.1 135.0v3 M829.6 135.0v3 M832.0 135.0v3 M834.5 135.0v3 M837.0 135.0v3 M839.5 135.0v3 M842.0 135.0v3 M844.4 135.0v3 M846.9 135.0v3 M849.4 135.0v3 M851.9 135.0v3 M854.4 135.0v3 M856.8 135.0v3 M859.3 135.0v3 M861.8 135.0v3 M864.3 135.0v3 M866.8 135.0v3 M869.2 135.0v3 M871.7 135.0v3 M874.2 135.0v3 M876.7 135.0v3 M879.2 135.0v3 M881.6 135.0v3 M884.1 135.0v3 M886.6 135.0v3 M889.1 135.0v3 M891.6 135.0v3 M894.0 135.0v3 M896.5 135.0v3 M899.0 135.0v3 M901.5 135.0v3 M904.0 135.0v3 M906.4 135.0v3 M908.9 135.0v3 M911.4 135.0v3 M913.9 135.0v3 M916.4 135.0v3 M918.8 135.0v3 M921.3 135.0v3 M923.8 135.0v3 M926.3 135.0v3 M928.8 135.0v3 M931.2 135.0v3 M933.7 135.0v3 M936.2 135.0v3 M938.7 135.0v3 M941.2 135.0v3 M943.6 135.0v3 M946.1 135.0v3 M948.6 135.0v3 M951.1 135.0v3 M953.6 135.0v3 M956.0 135.0v3 M958.5 135.0v3 M961.0 135.0v3 M963.5 135.0v3 M966.0 135.0v3 M968.4 135.0v3 M970.9 135.0v3 M973.4 135.0v3 M975.9 135.0v3 M978.4 135.0v3 M980.8 135.0v3 M983.3 135.0v3 M985.8 135.0v3 M988.3 135.0v3 M990.8 135.0v3 M993.2 135.0v3 M995.7 135.0v3 M998.2 135.0v3 M1000.7 135.0v3 M1003.2 135.0v3 M1005.6 135.0v3 M1008.1 135.0v3 M1010.6 135.0v3 M1013.1 135.0v3 M1015.6 135.0v3 M1018.0 135.0v3 M1020.5 135.0v3 M1023.0 135.0v3 M1025.5 135.0v3 M1028.0 135.0v3 M1030.4 135.0v3 M1032.9 135.0v3 M1035.4 135.0v3 M1037.9 135.0v3 M1040.4 135.0v3 M1042.8 135.0v3 M1045.3 135.0v3 M1047.8 135.0v3 M1050.3 135.0v3 M1052.8 135.0v3 M1055.2 135.0v3 M1057.7 135.0v3 M1060.2 135.0v3 M1062.7 135.0v3 M1065.2 135.0v3 M1067.6 135.0v3 M1070.1 135.0v3 M1072.6 135.0v3 M1075.1 135.0v3 M1077.6 135.0v3 M1080.0 135.0v3 M1082.5 135.0v3 M1085.0 135.0v3 M1087.5 135.0v3 M1090.0 135.0v3 M1092.4 135.0v3 M1094.9 135.0v3 M1097.4 135.0v3 M1099.9 135.0v3 M1102.4 135.0v3 M1104.8 135.0v3 M1107.3 135.0v3 M1109.8 135.0v3 M1112.3 135.0v3 M1114.8 135.0v3 M1117.2 135.0v3 M1119.7 135.0v3 M1122.2 135.0v3 M1124.7 135.0v3 M1127.2 135.0v3 M1129.6 135.0v3 M1132.1 135.0v3 M1134.6 135.0v3 M1137.1 135.0v3 M1139.6 135.0v3 M1142.0 135.0v3 M1144.5 135.0v3 M1147.0 135.0v3 M1149.5 135.0v3 M1152.0 135.0v3 M1154.4 135.0v3 M1156.9 135.0v3 M1159.4 135.0v3 M1161.9 135.0v3 M1164.4 135.0v3 M1166.8 135.0v3 M1169.3 135.0v3 M1171.8 135.0v3 M1174.3 135.0v3" stroke="#686860" stroke-width="1"/>
 <path d="M320.2 262.0v2.5 M330.1 262.0v2.5 M340.0 262.0v2.5 M349.9 262.0v2.5 M359.8 262.0v2.5 M369.7 262.0v2.5 M379.6 262.0v2.5 M389.5 262.0v2.5 M399.4 262.0v2.5 M409.3 262.0v2.5 M419.2 262.0v2.5 M429.1 262.0v2.5 M439.0 262.0v2.5 M448.9 262.0v2.5 M458.8 262.0v2.5 M468.7 262.0v2.5 M478.6 262.0v2.5 M488.5 262.0v2.5 M498.4 262.0v2.5 M508.3 262.0v2.5 M518.2 262.0v2.5 M528.1 262.0v2.5 M538.0 262.0v2.5 M547.9 262.0v2.5 M557.8 262.0v2.5 M567.7 262.0v2.5 M577.6 262.0v2.5 M587.5 262.0v2.5 M597.4 262.0v2.5 M607.3 262.0v2.5 M617.2 262.0v2.5 M627.1 262.0v2.5 M637.0 262.0v2.5 M646.9 262.0v2.5 M656.8 262.0v2.5 M666.7 262.0v2.5 M676.6 262.0v2.5 M686.5 262.0v2.5 M696.4 262.0v2.5 M706.3 262.0v2.5 M716.2 262.0v2.5 M726.1 262.0v2.5 M736.0 262.0v2.5 M745.9 262.0v2.5 M755.8 262.0v2.5 M765.7 262.0v2.5 M775.6 262.0v2.5 M785.5 262.0v2.5 M795.4 262.0v2.5 M805.3 262.0v2.5 M815.2 262.0v2.5 M825.1 262.0v2.5 M835.0 262.0v2.5 M844.9 262.0v2.5 M854.8 262.0v2.5 M864.7 262.0v2.5 M874.6 262.0v2.5 M884.5 262.0v2.5 M894.4 262.0v2.5 M904.3 262.0v2.5 M914.2 262.0v2.5 M924.1 262.0v2.5 M934.0 262.0v2.5 M943.9 262.0v2.5 M953.8 262.0v2.5 M963.7 262.0v2.5 M973.6 262.0v2.5 M983.5 262.0v2.5 M993.4 262.0v2.5 M1003.3 262.0v2.5 M1013.2 262.0v2.5 M1023.1 262.0v2.5 M1033.0 262.0v2.5 M1042.9 262.0v2.5 M1052.8 262.0v2.5 M1062.7 262.0v2.5 M1072.6 262.0v2.5 M1082.5 262.0v2.5 M1092.4 262.0v2.5 M1102.3 262.0v2.5 M1112.2 262.0v2.5 M1122.1 262.0v2.5 M1132.0 262.0v2.5 M1141.9 262.0v2.5 M1151.8 262.0v2.5 M1161.7 262.0v2.5 M1171.6 262.0v2.5" stroke="#383838" stroke-width="1"/>
 <path d="M316.2 135.0V262.0" stroke="#202020" stroke-width="1.2"/>
 <path d="M309 262.0H1180" stroke="#101010" stroke-width="1.6"/>
 <path d="M310.2 262.0h6 M313.2 256.9h3 M313.2 251.9h3 M313.2 246.8h3 M313.2 241.8h3 M310.2 236.7h6 M313.2 231.6h3 M313.2 226.6h3 M313.2 221.5h3 M313.2 216.5h3 M310.2 211.4h6 M313.2 206.3h3 M313.2 201.3h3 M313.2 196.2h3 M313.2 191.2h3 M310.2 186.1h6 M313.2 181.0h3 M313.2 176.0h3 M313.2 170.9h3 M313.2 165.9h3 M310.2 160.8h6 M313.2 155.7h3 M313.2 150.7h3 M313.2 145.6h3 M313.2 140.6h3 M310.2 135.5h6" stroke="#202020" stroke-width="1"/>
 <path d="M1175.7 262.0h6 M1175.7 255.3h3 M1175.7 248.5h6 M1175.7 241.8h3 M1175.7 235.1h6 M1175.7 228.3h3 M1175.7 221.6h6 M1175.7 214.9h3 M1175.7 208.2h6 M1175.7 201.4h3 M1175.7 194.7h6 M1175.7 188.0h3 M1175.7 181.2h6 M1175.7 174.5h3 M1175.7 167.8h6 M1175.7 161.1h3 M1175.7 154.3h6 M1175.7 147.6h3 M1175.7 140.9h6" stroke="#202020" stroke-width="1"/>
 <g font-size="12.5" fill="#505050" font-family="Liberation Sans"><text x="293" y="265.5" text-anchor="middle">0</text><text x="293" y="240.1" text-anchor="middle">20</text><text x="293" y="214.7" text-anchor="middle">40</text><text x="293" y="189.3" text-anchor="middle">60</text><text x="293" y="163.9" text-anchor="middle">80</text><text x="293" y="138.5" text-anchor="middle">100</text></g>
 <g font-size="12.5" fill="#f890a0" font-family="Liberation Sans"><text x="1193.5" y="265.5" text-anchor="middle">0</text><text x="1193.5" y="238.6" text-anchor="middle">20</text><text x="1193.5" y="211.7" text-anchor="middle">40</text><text x="1193.5" y="184.7" text-anchor="middle">60</text><text x="1193.5" y="157.8" text-anchor="middle">80</text></g>
 <g font-size="11" fill="#505050" font-family="Liberation Sans"><text x="404.7" y="280" text-anchor="middle">10 00:00:00</text><text x="523.8" y="280" text-anchor="middle">11 00:00:00</text><text x="642.9" y="280" text-anchor="middle">12 00:00:00</text><text x="762.0" y="280" text-anchor="middle">13 00:00:00</text><text x="881.1" y="280" text-anchor="middle">14 00:00:00</text><text x="1000.2" y="280" text-anchor="middle">15 00:00:00</text><text x="1119.3" y="280" text-anchor="middle">16 00:00:00</text></g>
 <text x="745" y="299" text-anchor="middle" font-size="11" font-weight="bold" fill="#202020" font-family="Liberation Sans">Время</text>
 <text transform="translate(270.5,198.5) rotate(-90)" text-anchor="middle" font-size="13" font-weight="bold" fill="#383838" font-family="Liberation Sans">газ ср. ()газ ()</text>
 <text transform="translate(1221,197.6) rotate(-90)" text-anchor="middle" font-size="14" fill="#f890a0" font-family="Liberation Sans" letter-spacing=".15">Максимальная скорость, км/ч</text>
</svg>
<div class="t" style="left:352.3px;top:116.5px;font-size:11px;color:#606068;transform:scaleX(1.045);transform-origin:0 0;">газ ср. ()</div>
<div class="t" style="left:551.0px;top:116.5px;font-size:11px;color:#606068;transform:scaleX(1.071);transform-origin:0 0;">газ ()</div>
<div class="t" style="left:748.5px;top:116.5px;font-size:11px;color:#606068;letter-spacing:0.13px;">Максимальная скорость, км/ч</div>
<div class="a" style="left:250px;top:310.5px;width:984px;height:5.5px;background:linear-gradient(#fff 0,#fff 2px,#c8f0fc 3px,#d8fcfc 4px,#a8c8f8 5px)"></div>
<div class="a" style="left:248px;top:316px;width:989px;height:282px;background:#d8fcfc"></div>
<div class="a" style="left:248px;top:316px;width:2px;height:282px;background:linear-gradient(90deg,#a8c8f8,#c8f0fc)"></div>
<div class="a" style="left:1231px;top:338px;width:6px;height:260px;background:linear-gradient(90deg,#e8fcfc 0,#d0f0fc 2px,#a8c8f8 4px,#fff 5px)"></div>
<div class="a" style="left:1235px;top:316px;width:2px;height:22px;background:linear-gradient(90deg,#a8c8f8,#fff)"></div>
<div class="a" style="left:250px;top:316px;width:985px;height:22px;border-radius:3px 3px 0 0;background:linear-gradient(#b0d0f8 0,#c8d8f8 2px,#c0b8f8 3px,#c8c0f8 4px,#8cb4f8 5px,#8cb4f8 17px,#b8b0f8 18px,#c0b8f8 21px,#a8c8f8 22px)"></div>
<svg width="1261" height="598">
 <rect x="255.5" y="320.5" width="13" height="13" rx="1.5" fill="#e8f4f4" stroke="#98a8b0"/>
 <rect x="257" y="322" width="10" height="3" fill="#38c8f8"/>
 <rect x="257" y="325" width="3" height="7" fill="#38d0f8"/>
 <rect x="261" y="325" width="2" height="7" fill="#f4f4fc"/>
 <rect x="264" y="325" width="3" height="7" fill="#c8e098"/>
 <path d="M1220.5 322.5h5v4h-5zM1223 326.5v5M1219 326.5h8" stroke="#f4f4ff" fill="none" stroke-width="1.1"/>
</svg>
<div class="t" style="left:271.0px;top:322.0px;font-size:11px;color:#ece4ff;transform:scaleX(0.947);transform-origin:0 0;">Отчеты</div>
<div class="a" style="left:255px;top:343px;width:47px;height:17px;border-radius:3px 3px 0 0;background:linear-gradient(#6a8aa8 0,#6a8aa8 8px,#5878b0 13px,#5a7cb8 17px);border:1px solid #6a90c8;border-bottom:none"></div>
<div class="t" style="left:262.5px;top:346.0px;font-size:11px;color:#e8eef8;transform:scaleX(0.877);transform-origin:0 0;">Пробег</div>
<div class="a" style="left:305px;top:343px;width:93px;height:17px;border-radius:3px 3px 0 0;background:linear-gradient(#6a8aa8 0,#6a8aa8 8px,#5878b0 13px,#5a7cb8 17px);border:1px solid #6a90c8;border-bottom:none"></div>
<div class="t" style="left:311.0px;top:346.0px;font-size:11px;color:#e8eef8;transform:scaleX(0.929);transform-origin:0 0;">Пробег суточный</div>
<div class="a" style="left:401px;top:343px;width:80px;height:17px;border-radius:3px 3px 0 0;background:linear-gradient(#6a8aa8 0,#6a8aa8 8px,#5878b0 13px,#5a7cb8 17px);border:1px solid #6a90c8;border-bottom:none"></div>
<div class="t" style="left:407.5px;top:346.0px;font-size:11px;color:#e8eef8;transform:scaleX(0.914);transform-origin:0 0;">Пробег общий</div>
<div class="a" style="left:484px;top:342px;width:59px;height:19px;border-radius:3px 3px 0 0;background:#e4fcfc;border:1px solid #b0d0f8;border-bottom:none"></div>
<div class="t" style="left:491.5px;top:346.0px;font-size:11px;color:#2a3a80;transform:scaleX(0.921);transform-origin:0 0;">Заправки</div>
<div class="a" style="left:544px;top:343px;width:124px;height:17px;border-radius:3px 3px 0 0;background:linear-gradient(#6a8aa8 0,#6a8aa8 8px,#5878b0 13px,#5a7cb8 17px);border:1px solid #6a90c8;border-bottom:none"></div>
<div class="t" style="left:552.5px;top:346.0px;font-size:11px;color:#e8eef8;transform:scaleX(0.911);transform-origin:0 0;">Топливо суточный ДУТ</div>
<div class="a" style="left:670px;top:343px;width:104px;height:17px;border-radius:3px 3px 0 0;background:linear-gradient(#6a8aa8 0,#6a8aa8 8px,#5878b0 13px,#5a7cb8 17px);border:1px solid #6a90c8;border-bottom:none"></div>
<div class="t" style="left:677.5px;top:346.0px;font-size:11px;color:#e8eef8;transform:scaleX(0.899);transform-origin:0 0;">Общий расход ДУТ</div>
<div class="a" style="left:776px;top:343px;width:47.5px;height:17px;border-radius:3px 3px 0 0;background:linear-gradient(#6a8aa8 0,#6a8aa8 8px,#5878b0 13px,#5a7cb8 17px);border:1px solid #6a90c8;border-bottom:none"></div>
<div class="t" style="left:782.2px;top:346.0px;font-size:11px;color:#e8eef8;transform:scaleX(0.964);transform-origin:0 0;">Расход</div>
<div class="a" style="left:825.7px;top:343px;width:104.59999999999991px;height:17px;border-radius:3px 3px 0 0;background:linear-gradient(#6a8aa8 0,#6a8aa8 8px,#5878b0 13px,#5a7cb8 17px);border:1px solid #6a90c8;border-bottom:none"></div>
<div class="t" style="left:833.5px;top:346.0px;font-size:11px;color:#e8eef8;transform:scaleX(0.901);transform-origin:0 0;">Общий расход ДРТ</div>
<div class="a" style="left:931.6px;top:343px;width:77.19999999999993px;height:17px;border-radius:3px 3px 0 0;background:linear-gradient(#6a8aa8 0,#6a8aa8 8px,#5878b0 13px,#5a7cb8 17px);border:1px solid #6a90c8;border-bottom:none"></div>
<div class="t" style="left:939.2px;top:346.0px;font-size:11px;color:#e8eef8;transform:scaleX(0.883);transform-origin:0 0;">Безопасность</div>
<div class="a" style="left:1010.8px;top:343px;width:116.5px;height:17px;border-radius:3px 3px 0 0;background:linear-gradient(#6a8aa8 0,#6a8aa8 8px,#5878b0 13px,#5a7cb8 17px);border:1px solid #6a90c8;border-bottom:none"></div>
<div class="t" style="left:1018.5px;top:346.0px;font-size:11px;color:#e8eef8;transform:scaleX(0.903);transform-origin:0 0;">Параметры движения</div>
<div class="a" style="left:1129.3px;top:343px;width:67.70000000000005px;height:17px;border-radius:3px 0 0 0;background:linear-gradient(#6a8aa8 0,#6a8aa8 8px,#5878b0 13px,#5a7cb8 17px);border:1px solid #6a90c8;border-bottom:none;border-right:none"></div>
<div class="t" style="left:1136.3px;top:346.0px;font-size:11px;color:#e8eef8;transform:scaleX(0.904);transform-origin:0 0;overflow:hidden;">КЗ Детальны</div>
<svg width="1261" height="598"><path d="M1207 348.5v7l-4-3.5z" fill="#a8b8c8"/><path d="M1221 348.5v7l4-3.5z" fill="#2a3d8c"/></svg>
<div class="a" style="left:254px;top:360px;width:977px;height:26px;background:#4a6aaa"></div>
<div class="a" style="left:254px;top:385px;width:977px;height:1px;background:#a8c8f8"></div>
<svg width="1261" height="598">
 <path d="M258.5 366v14" stroke="#7a90c8" stroke-dasharray="1 2"/>
 <circle cx="278" cy="373" r="7" fill="#18c038"/>
 <circle cx="278" cy="373" r="7" fill="none" stroke="#10a030" stroke-width=".8"/>
 <path d="M275.5 369v8l6-4z" fill="#fff"/>
 <rect x="334" y="366" width="12" height="13" fill="#e8f0f8" stroke="#c8d8e8"/>
 <rect x="335.5" y="367.5" width="9" height="10" fill="#b0d868"/>
 <path d="M340 367.5h4.5v5z" fill="#90c8f0"/><path d="M335.5 373l4 4.5h-4z" fill="#e8e060"/>
 <path d="M337 368l2 4 3 2 1 3" stroke="#e03030" stroke-width="1.4" fill="none"/>
 <path d="M363 379l4-5 3 2 7-6v9z" fill="#e8c880" stroke="#8a7050" stroke-width=".8"/>
 <path d="M363 375l4-5 3 2 5-4" stroke="#3a98e8" stroke-width="2.2" fill="none"/><path d="M373 366h4v4z" fill="#3a98e8"/>
 <rect x="391" y="369.5" width="15" height="8" rx="2" fill="#606468" stroke="#202020" stroke-width=".8"/>
 <rect x="393.5" y="365.5" width="10" height="5" fill="#f0f0f0" stroke="#303030" stroke-width=".8"/>
 <rect x="393.5" y="374.5" width="10" height="5" fill="#f8f8f8" stroke="#303030" stroke-width=".8"/>
 <path d="M395 376.5h7" stroke="#a0a0a0" stroke-width=".6"/>
</svg>
<div class="t" style="left:289.0px;top:367.0px;font-size:11px;color:#f4f4ff;letter-spacing:-0.24px;">ПУСК</div>
<div class="t" style="left:409.0px;top:367.0px;font-size:11px;color:#f4f4ff;letter-spacing:0.09px;">Печать / Экспорт</div>
<div class="t" style="left:1104.0px;top:367.0px;font-size:11px;color:#f4f4ff;letter-spacing:-0.07px;">Управление Панелями</div>
<div class="a" style="left:253px;top:386px;width:977px;height:168px;background:#fff"></div>
<div class="a" style="left:253px;top:386px;width:1px;height:168px;background:#a8c8f8"></div>
<div class="a" style="left:254px;top:387px;width:958px;height:36px;background:linear-gradient(#d4fcfc 0,#d4fcfc 24px,#dcd8fc 24px)"></div>
<div class="a" style="left:254px;top:422px;width:958px;height:1px;background:#98b4f0"></div>
<div class="a" style="left:269.5px;top:387px;width:1px;height:36px;background:#a0b8f0"></div>
<div class="a" style="left:469.6px;top:387px;width:1px;height:36px;background:#a0b8f0"></div>
<div class="a" style="left:602.7px;top:387px;width:1px;height:36px;background:#a0b8f0"></div>
<div class="a" style="left:752px;top:387px;width:1px;height:36px;background:#a0b8f0"></div>
<div class="a" style="left:901.6px;top:387px;width:1px;height:36px;background:#a0b8f0"></div>
<div class="a" style="left:1085.2px;top:387px;width:1px;height:36px;background:#a0b8f0"></div>
<div class="t" style="left:329.8px;top:400.0px;font-size:11px;color:#384888;transform:scaleX(0.903);transform-origin:0 0;">Местоположение</div>
<div class="t" style="left:505.3px;top:400.0px;font-size:11px;color:#384888;transform:scaleX(0.905);transform-origin:0 0;">Дата и время</div>
<div class="t" style="left:643.6px;top:400.0px;font-size:11px;color:#384888;transform:scaleX(0.915);transform-origin:0 0;">Заправлено, л</div>
<div class="t" style="left:791.5px;top:400.0px;font-size:11px;color:#384888;transform:scaleX(0.934);transform-origin:0 0;">До заправки, л</div>
<div class="t" style="left:950.4px;top:400.0px;font-size:11px;color:#384888;transform:scaleX(0.916);transform-origin:0 0;">После заправки, л</div>
<div class="t" style="left:1106.4px;top:400.0px;font-size:11px;color:#384888;transform:scaleX(0.897);transform-origin:0 0;">Способ генерации</div>
<div class="a" style="left:254px;top:423px;width:15.5px;height:19.30000000000001px;background:linear-gradient(#d4fcfc 0,#d4fcfc 55%,#dcd8fc 55%)"></div>
<div class="a" style="left:269.5px;top:423px;width:942.5px;height:19.30000000000001px;background:#dcdcfa"></div>
<div class="a" style="left:254px;top:441.3px;width:958px;height:1px;background:#c8c8b0"></div>
<div class="a" style="left:469.6px;top:423px;width:1px;height:19.30000000000001px;background:#e0e0a8"></div>
<div class="a" style="left:602.7px;top:423px;width:1px;height:19.30000000000001px;background:#e0e0a8"></div>
<div class="a" style="left:752px;top:423px;width:1px;height:19.30000000000001px;background:#e0e0a8"></div>
<div class="a" style="left:901.6px;top:423px;width:1px;height:19.30000000000001px;background:#e0e0a8"></div>
<div class="a" style="left:1085.2px;top:423px;width:1px;height:19.30000000000001px;background:#e0e0a8"></div>
<div class="t" style="left:281.0px;top:428.0px;font-size:11px;color:#101010;transform:scaleX(0.924);transform-origin:0 0;">Київська обл., м.Бровари р-н, місто...</div>
<div class="t" style="left:492.5px;top:428.0px;font-size:11px;color:#101010;transform:scaleX(0.921);transform-origin:0 0;">12.06.2016 5:31:38</div>
<div class="t" style="left:663.6px;top:428.0px;font-size:11px;color:#1a8c1a;font-weight:bold;">37,73</div>
<div class="t" style="left:814.1px;top:428.0px;font-size:11px;color:#101010;transform:scaleX(0.922);transform-origin:0 0;">39,31</div>
<div class="t" style="left:980.7px;top:428.0px;font-size:11px;color:#101010;transform:scaleX(0.922);transform-origin:0 0;">77,04</div>
<div class="t" style="left:1133.0px;top:428.0px;font-size:11px;color:#101010;transform:scaleX(0.895);transform-origin:0 0;">system</div>
<div class="a" style="left:254px;top:442.3px;width:15.5px;height:19.099999999999966px;background:linear-gradient(#d4fcfc 0,#d4fcfc 55%,#dcd8fc 55%)"></div>
<div class="a" style="left:269.5px;top:442.3px;width:942.5px;height:19.099999999999966px;background:#fff"></div>
<div class="a" style="left:254px;top:460.4px;width:958px;height:1px;background:#c8c8b0"></div>
<div class="a" style="left:469.6px;top:442.3px;width:1px;height:19.099999999999966px;background:#e0e0a8"></div>
<div class="a" style="left:602.7px;top:442.3px;width:1px;height:19.099999999999966px;background:#e0e0a8"></div>
<div class="a" style="left:752px;top:442.3px;width:1px;height:19.099999999999966px;background:#e0e0a8"></div>
<div class="a" style="left:901.6px;top:442.3px;width:1px;height:19.099999999999966px;background:#e0e0a8"></div>
<div class="a" style="left:1085.2px;top:442.3px;width:1px;height:19.099999999999966px;background:#e0e0a8"></div>
<div class="t" style="left:281.0px;top:447.3px;font-size:11px;color:#101010;transform:scaleX(0.924);transform-origin:0 0;">Київська обл., м.Бровари р-н, місто...</div>
<div class="t" style="left:490.2px;top:447.3px;font-size:11px;color:#101010;transform:scaleX(0.910);transform-origin:0 0;">12.06.2016 17:18:39</div>
<div class="t" style="left:663.6px;top:447.3px;font-size:11px;color:#1a8c1a;font-weight:bold;">15,02</div>
<div class="t" style="left:814.1px;top:447.3px;font-size:11px;color:#101010;transform:scaleX(0.922);transform-origin:0 0;">47,53</div>
<div class="t" style="left:980.7px;top:447.3px;font-size:11px;color:#101010;transform:scaleX(0.922);transform-origin:0 0;">62,54</div>
<div class="t" style="left:1133.0px;top:447.3px;font-size:11px;color:#101010;transform:scaleX(0.895);transform-origin:0 0;">system</div>
<div class="a" style="left:254px;top:461.4px;width:15.5px;height:19.600000000000023px;background:linear-gradient(#d4fcfc 0,#d4fcfc 55%,#dcd8fc 55%)"></div>
<div class="a" style="left:269.5px;top:461.4px;width:942.5px;height:19.600000000000023px;background:#dcdcfa"></div>
<div class="a" style="left:254px;top:480px;width:958px;height:1px;background:#c8c8b0"></div>
<div class="a" style="left:469.6px;top:461.4px;width:1px;height:19.600000000000023px;background:#e0e0a8"></div>
<div class="a" style="left:602.7px;top:461.4px;width:1px;height:19.600000000000023px;background:#e0e0a8"></div>
<div class="a" style="left:752px;top:461.4px;width:1px;height:19.600000000000023px;background:#e0e0a8"></div>
<div class="a" style="left:901.6px;top:461.4px;width:1px;height:19.600000000000023px;background:#e0e0a8"></div>
<div class="a" style="left:1085.2px;top:461.4px;width:1px;height:19.600000000000023px;background:#e0e0a8"></div>
<div class="t" style="left:281.0px;top:466.4px;font-size:11px;color:#101010;transform:scaleX(0.924);transform-origin:0 0;">Київська обл., м.Бровари р-н, місто...</div>
<div class="t" style="left:492.5px;top:466.4px;font-size:11px;color:#101010;transform:scaleX(0.921);transform-origin:0 0;">13.06.2016 6:21:36</div>
<div class="t" style="left:663.6px;top:466.4px;font-size:11px;color:#1a8c1a;font-weight:bold;">39,45</div>
<div class="t" style="left:814.1px;top:466.4px;font-size:11px;color:#101010;transform:scaleX(0.922);transform-origin:0 0;">37,90</div>
<div class="t" style="left:980.7px;top:466.4px;font-size:11px;color:#101010;transform:scaleX(0.922);transform-origin:0 0;">77,34</div>
<div class="t" style="left:1133.0px;top:466.4px;font-size:11px;color:#101010;transform:scaleX(0.895);transform-origin:0 0;">system</div>
<div class="a" style="left:254px;top:481px;width:15.5px;height:19px;background:linear-gradient(#d4fcfc 0,#d4fcfc 55%,#dcd8fc 55%)"></div>
<div class="a" style="left:269.5px;top:481px;width:942.5px;height:19px;background:#fff"></div>
<div class="a" style="left:254px;top:499px;width:958px;height:1px;background:#c8c8b0"></div>
<div class="a" style="left:469.6px;top:481px;width:1px;height:19px;background:#e0e0a8"></div>
<div class="a" style="left:602.7px;top:481px;width:1px;height:19px;background:#e0e0a8"></div>
<div class="a" style="left:752px;top:481px;width:1px;height:19px;background:#e0e0a8"></div>
<div class="a" style="left:901.6px;top:481px;width:1px;height:19px;background:#e0e0a8"></div>
<div class="a" style="left:1085.2px;top:481px;width:1px;height:19px;background:#e0e0a8"></div>
<div class="t" style="left:281.0px;top:486.0px;font-size:11px;color:#101010;transform:scaleX(0.924);transform-origin:0 0;">Київська обл., м.Бровари р-н, місто...</div>
<div class="t" style="left:492.5px;top:486.0px;font-size:11px;color:#101010;transform:scaleX(0.921);transform-origin:0 0;">14.06.2016 8:44:16</div>
<div class="t" style="left:663.6px;top:486.0px;font-size:11px;color:#1a8c1a;font-weight:bold;">47,68</div>
<div class="t" style="left:814.1px;top:486.0px;font-size:11px;color:#101010;transform:scaleX(0.950);transform-origin:0 0;">28,11</div>
<div class="t" style="left:980.7px;top:486.0px;font-size:11px;color:#101010;transform:scaleX(0.922);transform-origin:0 0;">75,79</div>
<div class="t" style="left:1133.0px;top:486.0px;font-size:11px;color:#101010;transform:scaleX(0.895);transform-origin:0 0;">system</div>
<div class="a" style="left:254px;top:500px;width:15.5px;height:19.299999999999955px;background:linear-gradient(#d4fcfc 0,#d4fcfc 55%,#dcd8fc 55%)"></div>
<div class="a" style="left:269.5px;top:500px;width:942.5px;height:19.299999999999955px;background:#dcdcfa"></div>
<div class="a" style="left:254px;top:518.3px;width:958px;height:1px;background:#c8c8b0"></div>
<div class="a" style="left:469.6px;top:500px;width:1px;height:19.299999999999955px;background:#e0e0a8"></div>
<div class="a" style="left:602.7px;top:500px;width:1px;height:19.299999999999955px;background:#e0e0a8"></div>
<div class="a" style="left:752px;top:500px;width:1px;height:19.299999999999955px;background:#e0e0a8"></div>
<div class="a" style="left:901.6px;top:500px;width:1px;height:19.299999999999955px;background:#e0e0a8"></div>
<div class="a" style="left:1085.2px;top:500px;width:1px;height:19.299999999999955px;background:#e0e0a8"></div>
<div class="t" style="left:281.0px;top:505.0px;font-size:11px;color:#101010;transform:scaleX(0.924);transform-origin:0 0;">Київська обл., м.Бровари р-н, місто...</div>
<div class="t" style="left:492.5px;top:505.0px;font-size:11px;color:#101010;transform:scaleX(0.921);transform-origin:0 0;">15.06.2016 6:05:21</div>
<div class="t" style="left:663.6px;top:505.0px;font-size:11px;color:#1a8c1a;font-weight:bold;">33,38</div>
<div class="t" style="left:814.1px;top:505.0px;font-size:11px;color:#101010;transform:scaleX(0.922);transform-origin:0 0;">36,51</div>
<div class="t" style="left:980.7px;top:505.0px;font-size:11px;color:#101010;transform:scaleX(0.922);transform-origin:0 0;">69,89</div>
<div class="t" style="left:1133.0px;top:505.0px;font-size:11px;color:#101010;transform:scaleX(0.895);transform-origin:0 0;">system</div>
<div class="a" style="left:254px;top:519.3px;width:15.5px;height:19.600000000000023px;background:linear-gradient(#d4fcfc 0,#d4fcfc 55%,#dcd8fc 55%)"></div>
<div class="a" style="left:269.5px;top:519.3px;width:942.5px;height:19.600000000000023px;background:#fff"></div>
<div class="a" style="left:469.6px;top:519.3px;width:742.4px;height:19.600000000000023px;background:#6a8ea8"></div>
<div class="a" style="left:254px;top:537.9px;width:958px;height:1px;background:#c8c8b0"></div>
<div class="a" style="left:469.6px;top:519.3px;width:1px;height:19.600000000000023px;background:#e0e0a8"></div>
<div class="a" style="left:602.7px;top:519.3px;width:1px;height:19.600000000000023px;background:#e0e0a8"></div>
<div class="a" style="left:752px;top:519.3px;width:1px;height:19.600000000000023px;background:#e0e0a8"></div>
<div class="a" style="left:901.6px;top:519.3px;width:1px;height:19.600000000000023px;background:#e0e0a8"></div>
<div class="a" style="left:1085.2px;top:519.3px;width:1px;height:19.600000000000023px;background:#e0e0a8"></div>
<div class="t" style="left:281.0px;top:524.3px;font-size:11px;color:#101010;transform:scaleX(0.924);transform-origin:0 0;">Київська обл., м.Бровари р-н, місто...</div>
<div class="t" style="left:492.5px;top:524.3px;font-size:11px;color:#f0f4ff;transform:scaleX(0.921);transform-origin:0 0;">16.06.2016 6:16:41</div>
<div class="t" style="left:663.6px;top:524.3px;font-size:11px;color:#1a8c1a;font-weight:bold;">27,79</div>
<div class="t" style="left:814.1px;top:524.3px;font-size:11px;color:#f0f4ff;transform:scaleX(0.922);transform-origin:0 0;">42,13</div>
<div class="t" style="left:980.7px;top:524.3px;font-size:11px;color:#f0f4ff;transform:scaleX(0.922);transform-origin:0 0;">69,92</div>
<div class="t" style="left:1133.0px;top:524.3px;font-size:11px;color:#f0f4ff;transform:scaleX(0.895);transform-origin:0 0;">system</div>
<svg width="1261" height="598"><path d="M259.5 525.5l3.5 3.5-3.5 3.5" stroke="#2a3d8c" stroke-width="1.6" fill="none"/></svg>
<div class="a" style="left:254px;top:538.9px;width:958px;height:14.1px;background:#6e6c54"></div>
<div class="a" style="left:254px;top:538.9px;width:958px;height:0.6px;background:#c8c8a0"></div>
<div class="a" style="left:1213px;top:387px;width:16px;height:166px;background:#6a8ca8"></div>
<div class="a" style="left:1228px;top:387px;width:1px;height:166px;background:#4a70a0"></div>
<div class="a" style="left:1214px;top:470px;width:14px;height:66px;background:linear-gradient(90deg,#dcd8fc 0,#dcd8fc 3px,#b4d8fc 3px,#b4d8fc 6px,#c8c0f8 6px,#c8c0f8 9px,#b4d8fc 9px,#b4d8fc 12px,#dcd8fc 12px)"></div>
<svg width="1261" height="598"><path d="M1216.5 397h9l-4.5-4.5z" fill="#d8e8f8"/><path d="M1216.5 543h9l-4.5 4.5z" fill="#d8e8f8"/><path d="M1217 502.5h8M1217 504.5h8M1217 506.5h8" stroke="#6078a8"/><path d="M1213 536.5h16" stroke="#3a68a0"/></svg>
<div class="a" style="left:253px;top:553px;width:977px;height:18px;background:#fff"></div>
<div class="a" style="left:255px;top:556.7px;width:48px;height:12.3px;background:linear-gradient(#dcd8fc 0,#dcd8fc 3px,#b4d8fc 3px,#b4d8fc 8px,#dcd8fc 8px)"></div>
<div class="a" style="left:255px;top:560.8px;width:48px;height:0.8px;background:#b0a8f0"></div>
<div class="a" style="left:385px;top:556.7px;width:78px;height:12.3px;background:linear-gradient(#dcd8fc 0,#dcd8fc 3px,#b4d8fc 3px,#b4d8fc 8px,#dcd8fc 8px)"></div>
<div class="a" style="left:385px;top:560.8px;width:78px;height:0.8px;background:#b0a8f0"></div>
<div class="a" style="left:463px;top:553.2px;width:750px;height:16.6px;background:#6a8ca8;border:1px solid #2a68a8"></div>
<div class="a" style="left:1213px;top:553px;width:17px;height:18px;background:#e8fcfc"></div>
<div class="t" style="left:306.5px;top:557.0px;font-size:11px;color:#101010;transform:scaleX(0.902);transform-origin:0 0;">Запись 12 из 12</div>
<svg width="1261" height="598"><g fill="#3a5c98"><path d="M257.5 558h1.3v7h-1.3zM262.5 558v7l-3.5-3.5zM266 558v7l-3.5-3.5z"/><path d="M278 558v7l-3.5-3.5zM282 558v7l-3.5-3.5z"/><path d="M297 558v7l-4-3.5z"/></g><g fill="#8890a0"><path d="M391 558v7l4-3.5z"/><path d="M405 558v7l3.5-3.5zM408.5 558v7l3.5-3.5z"/><path d="M419.5 558v7l3.5-3.5zM423 558v7l3.5-3.5z"/><path d="M426.5 558h1.3v7h-1.3z"/></g><path d="M435 561.5h7.5M438.75 558v7.5M451 561.5h8" stroke="#2a6890" stroke-width="1.8"/><path d="M470.5 557v9" stroke="#c8d8f0"/><path d="M1199.5 560v3l2-1.5z" fill="#c8d8f0"/></svg>
<div class="a" style="left:253px;top:571px;width:978px;height:27px;background:linear-gradient(#a8c8f8 0,#a8c8f8 1px,#d8fcfc 1px,#d8fcfc 2px,#dcd8fc 2px,#dcd8fc 9px,#b4d8fc 9px,#b4d8fc 15.5px,#dcd8fc 15.5px,#dcd8fc 26px,#e8f8fc 26px)"></div>
<div class="t" style="left:258.3px;top:580.0px;font-size:11px;color:#3a4a98;transform:scaleX(0.937);transform-origin:0 0;">В начале, л: 40</div>
<div class="a" style="left:335.5px;top:574px;width:1px;height:22px;background:#a8b8e8"></div>
<div class="t" style="left:341.6px;top:580.0px;font-size:11px;color:#3a4a98;transform:scaleX(0.961);transform-origin:0 0;">В конце, л: 46</div>
<div class="a" style="left:413.8px;top:574px;width:1px;height:22px;background:#a8b8e8"></div>
<div class="t" style="left:420.0px;top:580.0px;font-size:11px;color:#209020;transform:scaleX(0.943);transform-origin:0 0;">Заправлено, л: 410</div>
<div class="a" style="left:518.4px;top:574px;width:1px;height:22px;background:#a8b8e8"></div>
<div class="t" style="left:525.0px;top:580.0px;font-size:11px;color:#e81828;transform:scaleX(0.928);transform-origin:0 0;">Слито, л: 0</div>
<div class="a" style="left:582.3px;top:574px;width:1px;height:22px;background:#a8b8e8"></div>
<div class="t" style="left:588.5px;top:580.0px;font-size:11px;color:#3a4a98;transform:scaleX(0.960);transform-origin:0 0;">Общий расход, л: 404</div>
<div class="a" style="left:700.6px;top:574px;width:1px;height:22px;background:#a8b8e8"></div>
<div class="t" style="left:706.6px;top:580.0px;font-size:11px;color:#3a4a98;transform:scaleX(0.953);transform-origin:0 0;">Расход, л/100км: 28,07</div>
<div class="a" style="left:822px;top:574px;width:1px;height:22px;background:#a8b8e8"></div>
<div class="t" style="left:828.6px;top:580.0px;font-size:11px;color:#3a4a98;letter-spacing:-0.04px;">Ср. скорость, км/ч: 0,00</div>
<div class="a" style="left:952px;top:574px;width:1px;height:22px;background:#a8b8e8"></div>
<div class="a" style="left:1237px;top:34px;width:20px;height:564px;border-radius:6px 0 0 0;background:linear-gradient(90deg,#4a58a0 0,#4a58a0 3.5px,#4a8a9c 3.5px,#4a8a9c 8px,#6a8ca8 8px)"></div>
<svg width="1261" height="598"><rect x="1243" y="45" width="13" height="10" fill="#f8f0f0" stroke="#d0a0a0" stroke-width=".6"/><path d="M1245 45v10M1248 45v10M1251 45v10M1243 48h13M1243 51h13" stroke="#e0a0a0" stroke-width=".5"/><path d="M1241.5 56l4-8 4 8z" fill="#f0c020"/></svg>
<div class="t" style="left:1254px;top:58px;font-size:11px;color:#e8f0ff;letter-spacing:-0.4px;transform-origin:0 0;transform:rotate(90deg)">Уведомления</div>
<svg width="1261" height="598"><path d="M1257 548h-15a8 8 0 0 0 -8 8v26a8 8 0 0 0 6 7c8 2 14 5 17 9z" fill="#4c4a58"/><path d="M1240 553l15 2v18l-15-2z" fill="#083868"/><circle cx="1247.5" cy="562.5" r="5" fill="#4a4a58" stroke="#185878" stroke-width="1.5"/><path d="M1244 562.5l2-1.5 3 1.5 2-1.5" stroke="#207880" stroke-width="1.3" fill="none"/></svg>
</body></html>
